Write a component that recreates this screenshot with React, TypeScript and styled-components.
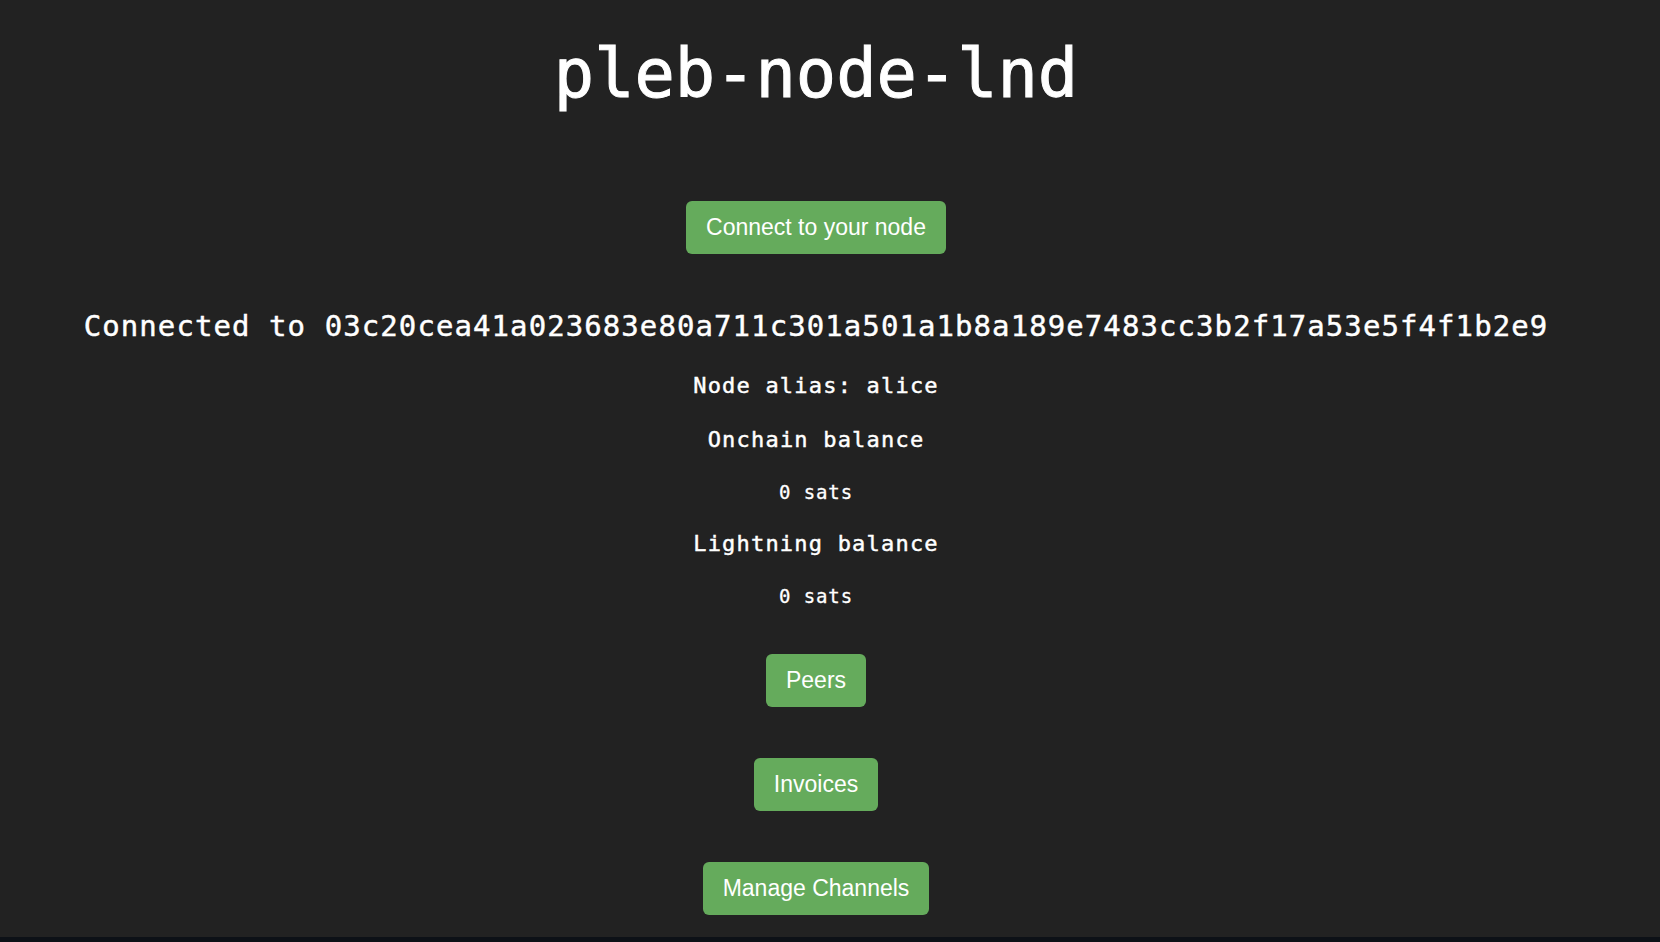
import React from "react";
import styled, { createGlobalStyle } from "styled-components";

const GlobalStyle = createGlobalStyle`
  html, body {
    margin: 0;
    padding: 0;
    background: #0d1117;
  }
  #root {
    min-height: 942px;
  }
`;

const Page = styled.main`
  box-sizing: border-box;
  height: 937px;
  background: #222222;
  color: #ffffff;
  display: flex;
  flex-direction: column;
  align-items: center;
  padding-right: 28px;
  font-family: "DejaVu Sans Mono", "Liberation Mono", monospace;
  -webkit-text-stroke: 0.45px #ffffff;
`;

const Title = styled.h1`
  margin: 34px 0 0;
  font-size: 67px;
  line-height: 80px;
  font-weight: 400;
  white-space: nowrap;
  -webkit-text-stroke: 1px #ffffff;
`;

const GreenButton = styled.button<{ $top: number }>`
  margin-top: ${(p) => p.$top}px;
  height: 53px;
  padding: 0 20px;
  border: none;
  border-radius: 6px;
  background: #65ab5c;
  color: #ffffff;
  font-family: "Liberation Sans", Arial, Helvetica, sans-serif;
  font-size: 23px;
  line-height: 53px;
  cursor: pointer;
  white-space: nowrap;
  -webkit-text-stroke: 0;
`;

const ConnectedLine = styled.h2`
  margin: 52px 0 0;
  font-size: 29px;
  letter-spacing: 1.08px;
  line-height: 40px;
  font-weight: 400;
  white-space: nowrap;
`;

const InfoLine = styled.h3<{ $top: number }>`
  margin: ${(p) => p.$top}px 0 0;
  font-size: 22px;
  letter-spacing: 1.2px;
  line-height: 30px;
  font-weight: 400;
  white-space: nowrap;
`;

const Amount = styled.p`
  margin: 22px 0 0;
  font-size: 19px;
  letter-spacing: 0.9px;
  line-height: 30px;
  white-space: nowrap;
  -webkit-text-stroke: 0.3px #ffffff;
`;

const Actions = styled.nav`
  margin-top: 43px;
  display: flex;
  flex-direction: column;
  align-items: center;
  gap: 51px;
`;

export default function App() {
  return (
    <>
      <GlobalStyle />
      <Page>
        <Title>pleb-node-lnd</Title>
        <GreenButton $top={87}>Connect to your node</GreenButton>
        <ConnectedLine>
          Connected to 03c20cea41a023683e80a711c301a501a1b8a189e7483cc3b2f17a53e5f4f1b2e9
        </ConnectedLine>
        <InfoLine $top={25}>Node alias: alice</InfoLine>
        <InfoLine $top={24}>Onchain balance</InfoLine>
        <Amount>0 sats</Amount>
        <InfoLine $top={22}>Lightning balance</InfoLine>
        <Amount>0 sats</Amount>
        <Actions>
          <GreenButton $top={0}>Peers</GreenButton>
          <GreenButton $top={0}>Invoices</GreenButton>
          <GreenButton $top={0}>Manage Channels</GreenButton>
        </Actions>
      </Page>
    </>
  );
}
